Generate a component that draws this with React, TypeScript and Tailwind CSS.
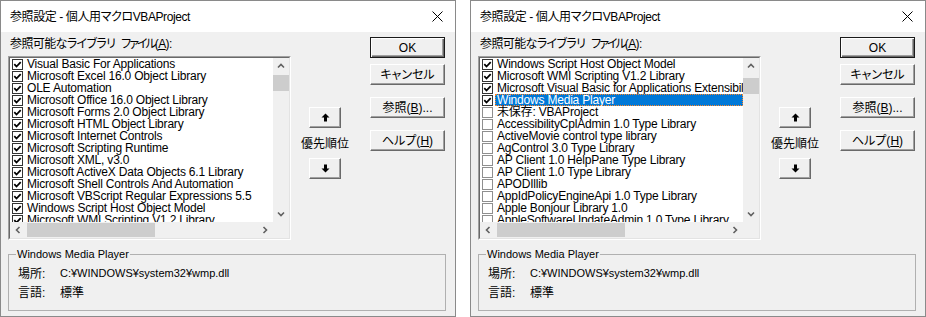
import React from "react";

type Item = { name: string; checked: boolean; selected?: boolean };

const leftItems: Item[] = [
  { name: "Visual Basic For Applications", checked: true },
  { name: "Microsoft Excel 16.0 Object Library", checked: true },
  { name: "OLE Automation", checked: true },
  { name: "Microsoft Office 16.0 Object Library", checked: true },
  { name: "Microsoft Forms 2.0 Object Library", checked: true },
  { name: "Microsoft HTML Object Library", checked: true },
  { name: "Microsoft Internet Controls", checked: true },
  { name: "Microsoft Scripting Runtime", checked: true },
  { name: "Microsoft XML, v3.0", checked: true },
  { name: "Microsoft ActiveX Data Objects 6.1 Library", checked: true },
  { name: "Microsoft Shell Controls And Automation", checked: true },
  { name: "Microsoft VBScript Regular Expressions 5.5", checked: true },
  { name: "Windows Script Host Object Model", checked: true },
  { name: "Microsoft WMI Scripting V1.2 Library", checked: true },
];

const rightItems: Item[] = [
  { name: "Windows Script Host Object Model", checked: true },
  { name: "Microsoft WMI Scripting V1.2 Library", checked: true },
  { name: "Microsoft Visual Basic for Applications Extensibility 5.3", checked: true },
  { name: "Windows Media Player", checked: true, selected: true },
  { name: "未保存: VBAProject", checked: false },
  { name: "AccessibilityCplAdmin 1.0 Type Library", checked: false },
  { name: "ActiveMovie control type library", checked: false },
  { name: "AgControl 3.0 Type Library", checked: false },
  { name: "AP Client 1.0 HelpPane Type Library", checked: false },
  { name: "AP Client 1.0 Type Library", checked: false },
  { name: "APODIllib", checked: false },
  { name: "AppIdPolicyEngineApi 1.0 Type Library", checked: false },
  { name: "Apple Bonjour Library 1.0", checked: false },
  { name: "AppleSoftwareUpdateAdmin 1.0 Type Library", checked: false },
];

const CheckBox = ({ checked }: { checked: boolean }) => (
  <span
    className={`flex h-[11px] w-[11px] shrink-0 items-center justify-center border bg-white ${
      checked ? "border-[#333333]" : "border-[#8f8f8f]"
    }`}
  >
    {checked && (
      <svg width="9" height="9" viewBox="0 0 9 9">
        <path d="M1.3 4.2 L3.5 6.5 L7.7 2.1" fill="none" stroke="#000" strokeWidth="1.8" />
      </svg>
    )}
  </span>
);

const Chevron = ({ dir }: { dir: "up" | "down" | "left" | "right" }) => {
  const d = {
    up: "M1 5.5 L4 2.5 L7 5.5",
    down: "M1 2.5 L4 5.5 L7 2.5",
    left: "M5.5 1 L2.5 4 L5.5 7",
    right: "M2.5 1 L5.5 4 L2.5 7",
  }[dir];
  return (
    <svg width="8" height="8" viewBox="0 0 8 8">
      <path d={d} fill="none" stroke="#606060" strokeWidth="1.6" />
    </svg>
  );
};

const Arrow = ({ up }: { up: boolean }) => (
  <svg width="9" height="9" viewBox="0 0 9 9" className={up ? "" : "rotate-180"}>
    <polygon points="4.5,0.5 8.5,4.5 6,4.5 6,8.5 3,8.5 3,4.5 0.5,4.5" fill="#000" />
  </svg>
);

const Button = ({
  children,
  isDefault,
  className = "",
}: {
  children: React.ReactNode;
  isDefault?: boolean;
  className?: string;
}) => (
  <div
    className={`flex h-[21px] items-center justify-center bg-[#f0f0f0] ${
      isDefault
        ? "border border-[#1a1a1a] shadow-[inset_1px_1px_0_#ffffff,inset_-1px_-1px_0_#696969,inset_-2px_-2px_0_#a0a0a0]"
        : "border border-t-white border-l-white border-r-[#696969] border-b-[#696969] shadow-[inset_-1px_-1px_0_#a0a0a0]"
    } ${className}`}
  >
    {children}
  </div>
);

const Dialog = ({ items, thumbTop }: { items: Item[]; thumbTop: number }) => {
  return (
    <div className="flex h-[317px] w-[456px] flex-col border border-[#8a8a8a]">
      <div className="flex h-[31px] shrink-0 items-center justify-between bg-white pl-[9px] pr-[12px]">
        <span className="text-[12px] tracking-[-0.4px] text-black">
          参照設定 - 個人用マクロVBAProject
        </span>
        <svg width="11" height="11" viewBox="0 0 11 11">
          <path d="M0.5 0.5 L10.5 10.5 M10.5 0.5 L0.5 10.5" stroke="#000" strokeWidth="1" />
        </svg>
      </div>

      <div className="flex flex-1 flex-col bg-[#f0f0f0] px-[7px] pt-[5px]">
        <div className="flex">
          <div className="w-[283px]">
            <div className="h-[19px] whitespace-nowrap pl-[2px] text-[12px] leading-[14px] tracking-[-0.6px]">
              参照可能なライブラリ <span className="ml-[3px] tracking-[-2px]">ファイル</span>(
              <span className="underline">A</span>):
            </div>
            <div className="h-[184px] border border-[#a0a0a0] border-r-white border-b-white">
              <div className="grid h-full grid-cols-[1fr_16px] grid-rows-[1fr_16px] border border-[#696969] border-r-[#e3e3e3] border-b-[#e3e3e3]">
                <div className="overflow-hidden bg-white">
                  {items.map((item, index) => (
                    <div
                      key={index}
                      className="flex h-[12px] items-center whitespace-nowrap pl-[2px] text-[12px] tracking-[-0.2px]"
                    >
                      <CheckBox checked={item.checked} />
                      <span
                        className={`ml-[2px] flex-1 pl-[2px] leading-[12px] ${
                          item.selected
                            ? "bg-[#0078d7] text-white outline-1 outline-dotted outline-[#ff8728] -outline-offset-1"
                            : "text-black"
                        }`}
                      >
                        {item.name}
                      </span>
                    </div>
                  ))}
                </div>
                <div className="flex flex-col items-center bg-[#f0f0f0]">
                  <div className="flex h-[16px] w-full items-center justify-center">
                    <Chevron dir="up" />
                  </div>
                  <div className="w-full bg-[#cdcdcd]" style={{ marginTop: thumbTop - 16, height: 16 }} />
                  <div className="flex-1" />
                  <div className="flex h-[16px] w-full items-center justify-center">
                    <Chevron dir="down" />
                  </div>
                </div>
                <div className="flex items-center bg-[#f0f0f0]">
                  <div className="flex h-[16px] w-[16px] items-center justify-center">
                    <Chevron dir="left" />
                  </div>
                  <div className="ml-[1px] h-[14px] w-[128px] bg-[#cdcdcd]" />
                  <div className="flex-1" />
                  <div className="flex h-[16px] w-[16px] items-center justify-center">
                    <Chevron dir="right" />
                  </div>
                </div>
                <div className="bg-[#f0f0f0]" />
              </div>
            </div>
          </div>

          <div className="ml-[4px] flex w-[60px] flex-col items-center pt-[70px]">
            <Button className="w-[32px]">
              <Arrow up />
            </Button>
            <div className="mt-[7px] h-[18px] text-[12px] leading-[18px]">優先順位</div>
            <Button className="mt-[5px] w-[32px]">
              <Arrow up={false} />
            </Button>
          </div>

          <div className="ml-[15px] flex w-[75px] flex-col text-[12px]">
            <Button isDefault>OK</Button>
            <Button className="mt-[6px]">キャンセル</Button>
            <Button className="mt-[12px]">
              <span>
                参照(<span className="underline">B</span>)...
              </span>
            </Button>
            <Button className="mt-[12px]">
              <span>
                ヘルプ(<span className="underline">H</span>)
              </span>
            </Button>
          </div>
        </div>

        <fieldset className="mt-[8px] h-[63px] w-[438px] border border-[#b0b0b0]">
          <legend className="ml-[7px] px-[1px] text-[11px] leading-[12px]">Windows Media Player</legend>
          <div className="pl-[9px] pt-[4px]">
            <div className="flex h-[19px] items-center">
              <span className="w-[42px] text-[12px]">場所:</span>
              <span className="text-[11px]">C:¥WINDOWS¥system32¥wmp.dll</span>
            </div>
            <div className="flex h-[19px] items-center">
              <span className="w-[42px] text-[12px]">言語:</span>
              <span className="text-[12px]">標準</span>
            </div>
          </div>
        </fieldset>
      </div>
    </div>
  );
};

const App = () => {
  return (
    <div className="flex h-[317px] w-[926px] gap-[14px] bg-white font-['Liberation_Sans','Noto_Sans_CJK_JP',sans-serif] text-black [font-feature-settings:'palt']">
      <Dialog items={leftItems} thumbTop={17} />
      <Dialog items={rightItems} thumbTop={20} />
    </div>
  );
};

export default App;
